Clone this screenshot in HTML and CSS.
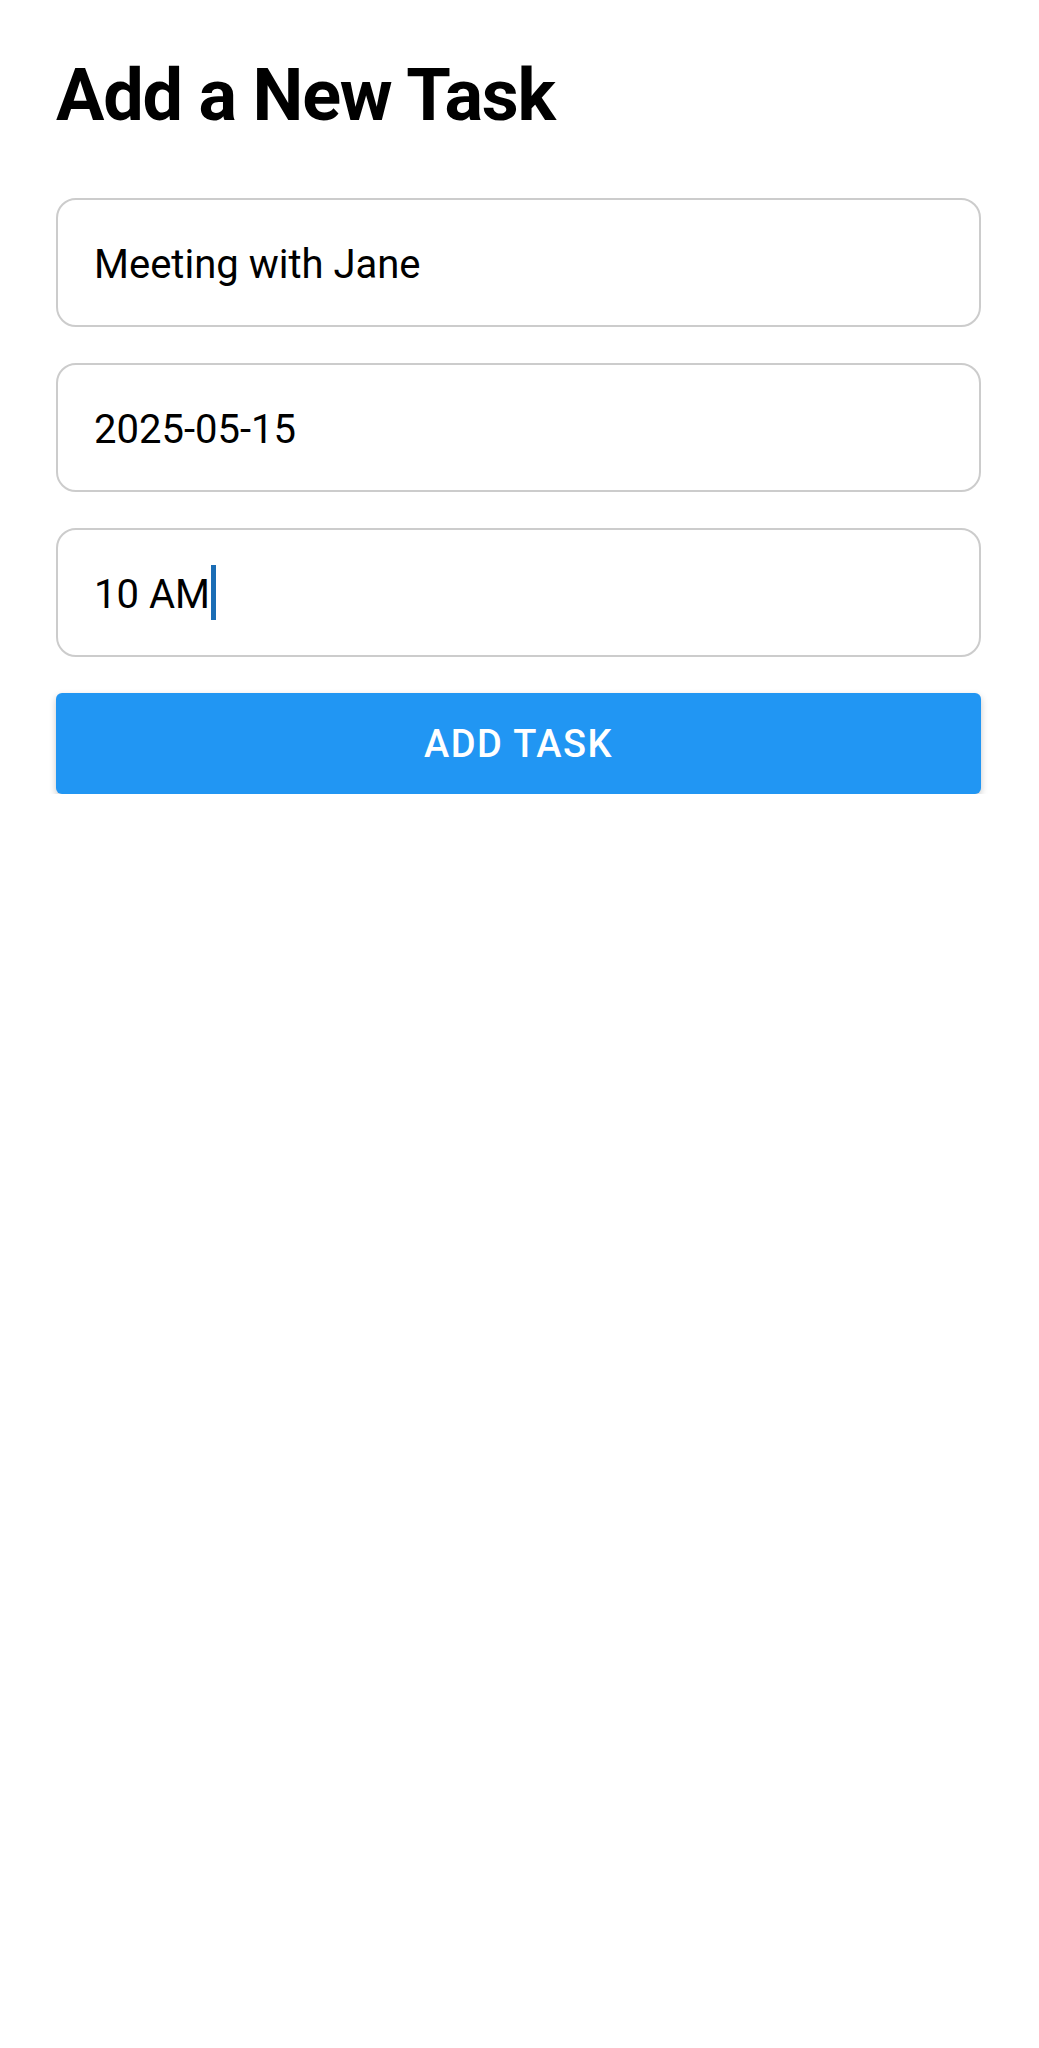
FILE: index.html
```html
<!DOCTYPE html>
<html>
<head>
<meta charset="utf-8">
<link rel="stylesheet" href="styles.css">
</head>
<body>
<div class="screen">
  <h1 class="title">Add a New Task</h1>
  <div class="form">
    <div class="field"><span class="value">Meeting with Jane</span></div>
    <div class="field"><span class="value">2025-05-15</span></div>
    <div class="field"><span class="value">10 AM</span><span class="caret"></span></div>
    <div class="button">ADD TASK</div>
  </div>
</div>
</body>
</html>
```
FILE: styles.css
```css
html, body {
  margin: 0;
  padding: 0;
  background: #ffffff;
}
body {
  font-family: Roboto, "Noto Sans", sans-serif;
  color: #000;
}
.screen {
  padding: 60px 58px 0 56px;
}
.title {
  margin: 0;
  font-size: 72px;
  line-height: 72px;
  font-weight: 700;
  letter-spacing: -1.2px;
}
.form {
  margin-top: 66px;
  display: flex;
  flex-direction: column;
  gap: 36px;
}
.field {
  height: 129px;
  box-sizing: border-box;
  border: 2px solid #cccccc;
  border-radius: 20px;
  display: flex;
  align-items: center;
  padding-left: 36px;
  font-size: 40px;
}
.value {
  line-height: 1;
  padding-top: 4px;
}
.caret {
  display: inline-block;
  width: 5px;
  height: 55px;
  background: #1b6db5;
  margin-left: 1px;
}
.button {
  height: 101px;
  background: #2196f3;
  border-radius: 6px;
  color: #fff;
  font-size: 38px;
  font-weight: 500;
  letter-spacing: 1.5px;
  display: flex;
  align-items: center;
  justify-content: center;
  box-shadow: 0 3px 7px rgba(0,0,0,0.22);
}
```
